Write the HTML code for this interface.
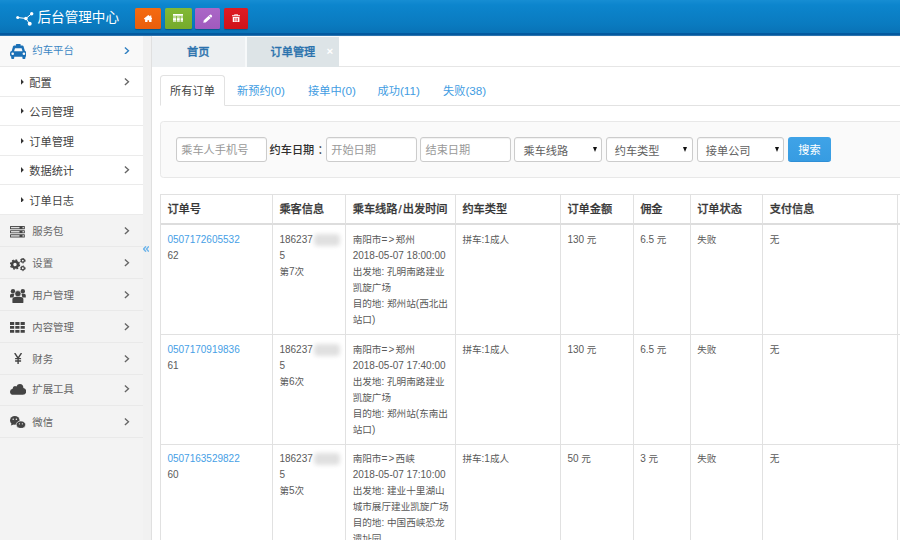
<!DOCTYPE html>
<html lang="zh-CN">
<head>
<meta charset="utf-8">
<title>后台管理中心</title>
<style>
*{box-sizing:border-box;margin:0;padding:0}
html,body{width:900px;height:540px;overflow:hidden;background:#fff}
body{font-family:"Liberation Sans","Noto Sans CJK SC",sans-serif;color:#555;position:relative;font-size:9.6px}
a{text-decoration:none;color:inherit}
ul{list-style:none}

/* ---------- header ---------- */
#hd{position:absolute;left:0;top:0;width:900px;height:36px;background:linear-gradient(to bottom,#168dd3 0,#0c85cd 5px,#0a7bc0 24px,#0972b6 33px,#03599f 33.5px,#03599f 35.4px,#f4f7f8 36px)}
#logo{position:absolute;left:15px;top:11px;width:20px;height:16px}
#title{position:absolute;left:37.5px;top:8px;font-size:13.6px;line-height:20px;color:#fff;white-space:nowrap}
.hb{position:absolute;top:8px;height:20.5px;border-radius:1.5px;box-shadow:0 1px 1px rgba(0,0,0,.25)}
.hb svg{position:absolute}
#b1{left:135px;width:26.3px;background:linear-gradient(#f56b10,#e95e0c)}
#b2{left:165px;width:27px;background:linear-gradient(#82b936,#75aa2b)}
#b3{left:195.3px;width:25.2px;background:linear-gradient(#ab67c7,#a05abd)}
#b4{left:224.3px;width:23.8px;background:linear-gradient(#de1c24,#cf1219)}

/* ---------- sidebar ---------- */
#sb{position:absolute;left:0;top:36px;width:143px;height:504px;background:#f3f3f3}
#strip{position:absolute;left:143px;top:36px;width:9px;height:504px;background:#f1f1f1;border-right:1px solid #e0e0e0}
#coll{position:absolute;left:143px;top:246.1px;width:6.4px;height:6px}
.m1{position:absolute;left:0;width:143px;height:31.95px;border-bottom:1px solid #e9e9e9;font-size:10.4px;color:#666}
#sb .ic{position:absolute}
.m1 .in{position:absolute;left:0;width:143px;height:0}
.m1 .tx{position:absolute;left:32.3px;top:9.6px;line-height:16px;white-space:nowrap}
.chev{position:absolute;left:124.4px;width:5.4px;height:7.6px}
.m1.on{background:#f9f9f9;color:#3a86c3}
.m1.on .tx{top:6.6px}
.m2{position:absolute;left:0;width:143px;height:29.45px;border-bottom:1px solid #ebebeb;background:#fff;font-size:11.2px;color:#444}
.m2 .tx{position:absolute;left:29.3px;top:7.5px;line-height:16px;white-space:nowrap}
.m2 .car{position:absolute;left:20.9px;top:11.4px;width:2.8px;height:5.8px}

/* ---------- main ---------- */
#tabs{position:absolute;left:152px;top:36px;width:748px;height:31px;background:#fff;border-bottom:1px solid #e6e6e6;border-top:1px solid #fafbfc}
.tab{position:absolute;top:0;height:29.5px;font-size:11.2px;font-weight:500;-webkit-text-stroke:.3px #2a72ad;color:#2a72ad;line-height:30.5px;text-align:center}
#t1{left:0;width:94.5px;background:#edf0f2;border-right:2px solid #f7f9fa}
#t2{left:94.5px;width:92.8px;background:#dde4e7}
#t2 .x{position:absolute;left:80px;top:-1px;font-size:11.5px;color:#fff;font-weight:bold;-webkit-text-stroke:0}

#nav{position:absolute;left:160px;top:75px;width:740px;height:30.5px;border-bottom:1px solid #e2e2e2}
.nt{position:absolute;top:0;height:30.5px;line-height:32.5px;font-size:11.2px;color:#419ce2;white-space:nowrap}
.nt .n{font-size:11.7px}
.nt.on{left:0;width:65px;border:1px solid #e2e2e2;border-bottom-color:#fff;border-radius:3.5px 3.5px 0 0;color:#444;text-align:center;line-height:31px;background:#fff}

#well{position:absolute;left:160px;top:121px;width:760px;height:56.5px;background:#fafafa;border:1px solid #e8e8e8;border-radius:3.5px}
.inp{position:absolute;top:137px;height:24.5px;background:#fff;border:1px solid #ccc;border-radius:3px;font-size:11.2px;line-height:24.5px;color:#999;padding-left:4.2px;white-space:nowrap;box-shadow:inset 0 1px 1px rgba(0,0,0,.06)}
.sel{color:#606060;padding-left:8.2px;line-height:27.5px}
.sel i{position:absolute;right:4.6px;top:8.8px;width:0;height:0;border-top:5px solid #111;border-left:2.7px solid transparent;border-right:2.7px solid transparent}
#lbl{position:absolute;left:269.5px;top:138px;line-height:24.5px;font-size:11.2px;font-weight:500;color:#2e2e2e;white-space:nowrap}
#btn{position:absolute;left:788px;top:137px;width:43px;height:24.5px;border-radius:3px;background:linear-gradient(#3fa3e7,#379ce2);border:0;border-bottom:1px solid #2f8fd6;color:#fff;font-size:11.2px;line-height:26px;text-align:center}

/* ---------- table ---------- */
#tb{position:absolute;left:160px;top:194px;width:760px;border-collapse:separate;border-spacing:0;border-left:1px solid #e1e1e1;border-top:1px solid #e1e1e1;table-layout:fixed;background:#fff}
#tb th,#tb td{border-right:1px solid #e1e1e1;border-bottom:1px solid #e1e1e1;text-align:left;vertical-align:top;padding:6.4px 6px 6.4px 6.4px;font-size:9.6px;line-height:16px;color:#5a5a5a}
#tb th{font-size:11.2px;font-weight:500;-webkit-text-stroke:.25px #363636;color:#363636;height:30px;line-height:16px;padding-top:6px;border-bottom:2px solid #ddd}
#tb td a{color:#46a0e6}
#tb td .n{font-size:10px}
#tb td .ar{letter-spacing:1.2px}
#tb th .sl{margin:0 1.1px}
.blur{display:inline-block;width:26px;height:12px;vertical-align:-3px;background:#e0e0e0;border-radius:4px;filter:blur(2px);margin-left:1px;margin-right:-30px}
</style>
</head>
<body>

<div id="hd">
  <svg id="logo" viewBox="0 0 20 16"><g fill="#fff"><circle cx="2.7" cy="6.5" r="1.5"/><circle cx="10.9" cy="7.5" r="1.8"/><circle cx="16.7" cy="2.7" r="1.7"/><circle cx="14.7" cy="12.8" r="2"/></g><path d="M2.7 6.5L10.9 7.5L16.7 2.7M10.9 7.5L14.7 12.8" stroke="#fff" stroke-width="1" fill="none"/></svg>
  <div id="title">后台管理中心</div>
  <a class="hb" id="b1"><svg style="left:8.6px;top:6.5px;width:8.6px;height:7.6px" viewBox="0 0 8.6 7.6"><path d="M4.3 0L0 3.6V4.3H1.1V7.6H3.5V5.2H5.1V7.6H7.5V4.3H8.6V3.6L7.3 2.5V.5H6.2V1.6Z" fill="#fff"/></svg></a>
  <a class="hb" id="b2"><svg style="left:7.7px;top:5.9px;width:10.6px;height:8.2px" viewBox="0 0 10.6 8.2"><path d="M0 0H10.6V1.7H0ZM0 2.6H3V8.2H0ZM3.8 2.6H6.8V8.2H3.8ZM7.6 2.6H10.6V8.2H7.6Z" fill="#fff"/><path d="M0 3.7H10.6M0 7.1H10.6" stroke="#7db32f" stroke-width=".6"/></svg></a>
  <a class="hb" id="b3"><svg style="left:7.4px;top:5.8px;width:10px;height:9px" viewBox="0 0 10 9"><path d="M2.6 6.6L7.6 2.2" stroke="#fff" stroke-width="3" stroke-linecap="round" fill="none"/><path d="M.3 8.8L.9 6L3.2 8.2Z" fill="#fff"/><path d="M6 1.8L8 4" stroke="#a660c2" stroke-width=".6"/></svg></a>
  <a class="hb" id="b4"><svg style="left:7.7px;top:5.7px;width:8.2px;height:8.5px" viewBox="0 0 8.8 8.7" preserveAspectRatio="none"><path d="M0 1.2H2.7V0H6.1V1.2H8.8V2.4H0ZM.8 3H8V7.7Q8 8.7 7 8.7H1.8Q.8 8.7 .8 7.7Z" fill="#fff"/><path d="M3.2 .9H5.6" stroke="#d9161e" stroke-width=".6"/><path d="M2.9 4V7.6M4.4 4V7.6M5.9 4V7.6" stroke="#d9161e" stroke-width=".7"/></svg></a>
</div>

<div id="sb">
<div class="m1 on" style="top:0px;height:31.4px"><span class="tx">约车平台</span><svg class="chev" style="top:10.9px" viewBox="0 0 5.4 7.6"><path d="M.9 .5L4.5 3.8L.9 7.1" fill="none" stroke="#2f7fc0" stroke-width="1.35"/></svg></div>
<div class="m2" style="top:31.4px;height:29.46px"><svg class="car" viewBox="0 0 2.8 5.8"><path d="M0 0L2.8 2.9L0 5.8Z" fill="#333"/></svg><span class="tx">配置</span><svg class="chev" style="top:10.6px" viewBox="0 0 5.4 7.6"><path d="M.9 .5L4.5 3.8L.9 7.1" fill="none" stroke="#666" stroke-width="1.35"/></svg></div>
<div class="m2" style="top:60.86px;height:29.46px"><svg class="car" viewBox="0 0 2.8 5.8"><path d="M0 0L2.8 2.9L0 5.8Z" fill="#333"/></svg><span class="tx">公司管理</span></div>
<div class="m2" style="top:90.32px;height:29.46px"><svg class="car" viewBox="0 0 2.8 5.8"><path d="M0 0L2.8 2.9L0 5.8Z" fill="#333"/></svg><span class="tx">订单管理</span></div>
<div class="m2" style="top:119.78px;height:29.46px"><svg class="car" viewBox="0 0 2.8 5.8"><path d="M0 0L2.8 2.9L0 5.8Z" fill="#333"/></svg><span class="tx">数据统计</span><svg class="chev" style="top:10.6px" viewBox="0 0 5.4 7.6"><path d="M.9 .5L4.5 3.8L.9 7.1" fill="none" stroke="#666" stroke-width="1.35"/></svg></div>
<div class="m2" style="top:149.24px;height:29.46px"><svg class="car" viewBox="0 0 2.8 5.8"><path d="M0 0L2.8 2.9L0 5.8Z" fill="#333"/></svg><span class="tx">订单日志</span></div>
<div class="m1" style="top:179px;height:32px"><div class="in" style="top:-1px"><span class="tx">服务包</span><svg class="chev" style="top:13px" viewBox="0 0 5.4 7.6"><path d="M.9 .5L4.5 3.8L.9 7.1" fill="none" stroke="#666" stroke-width="1.35"/></svg></div></div>
<div class="m1" style="top:211px;height:32px"><div class="in" style="top:-1px"><span class="tx">设置</span><svg class="chev" style="top:13px" viewBox="0 0 5.4 7.6"><path d="M.9 .5L4.5 3.8L.9 7.1" fill="none" stroke="#666" stroke-width="1.35"/></svg></div></div>
<div class="m1" style="top:243px;height:32px"><div class="in" style="top:-1px"><span class="tx">用户管理</span><svg class="chev" style="top:13px" viewBox="0 0 5.4 7.6"><path d="M.9 .5L4.5 3.8L.9 7.1" fill="none" stroke="#666" stroke-width="1.35"/></svg></div></div>
<div class="m1" style="top:275px;height:32px"><div class="in" style="top:-1px"><span class="tx">内容管理</span><svg class="chev" style="top:13px" viewBox="0 0 5.4 7.6"><path d="M.9 .5L4.5 3.8L.9 7.1" fill="none" stroke="#666" stroke-width="1.35"/></svg></div></div>
<div class="m1" style="top:307px;height:32px"><div class="in" style="top:-1px"><span class="tx">财务</span><svg class="chev" style="top:13px" viewBox="0 0 5.4 7.6"><path d="M.9 .5L4.5 3.8L.9 7.1" fill="none" stroke="#666" stroke-width="1.35"/></svg></div></div>
<div class="m1" style="top:339px;height:31px"><div class="in" style="top:-3px"><span class="tx">扩展工具</span><svg class="chev" style="top:13px" viewBox="0 0 5.4 7.6"><path d="M.9 .5L4.5 3.8L.9 7.1" fill="none" stroke="#666" stroke-width="1.35"/></svg></div></div>
<div class="m1" style="top:370px;height:32px"><div class="in" style="top:-1px"><span class="tx">微信</span><svg class="chev" style="top:13px" viewBox="0 0 5.4 7.6"><path d="M.9 .5L4.5 3.8L.9 7.1" fill="none" stroke="#666" stroke-width="1.35"/></svg></div></div>
<svg class="ic" style="left:9.8px;top:8px;width:16.6px;height:15px" viewBox="0 0 16.6 15"><g fill="#1b70b6"><rect x="6" y="0" width="4.6" height="2.2" rx=".6"/><path d="M4.3 1.5H12.3Q13.3 1.5 13.6 2.5L15.2 8H1.4L3 2.5Q3.3 1.5 4.3 1.5Z"/><rect x="0" y="7" width="16.6" height="5.8" rx="2"/><rect x="1.2" y="11.5" width="3" height="3.5" rx=".9"/><rect x="12.4" y="11.5" width="3" height="3.5" rx=".9"/></g><path d="M5 4.3H11.6L12.5 7.2H4.1Z" fill="#f9f9f9"/><circle cx="2.7" cy="9.8" r="1.3" fill="#f9f9f9"/><circle cx="13.9" cy="9.8" r="1.3" fill="#f9f9f9"/></svg><svg class="ic" style="left:10px;top:190.1px;width:14.8px;height:11.5px" viewBox="0 0 14.8 11.5"><g fill="#444"><rect x="0" y="0" width="14.8" height="3.2" rx=".5"/><rect x="0" y="4.15" width="14.8" height="3.2" rx=".5"/><rect x="0" y="8.3" width="14.8" height="3.2" rx=".5"/></g><g fill="#dedede"><rect x=".9" y=".9" width="8.6" height="1.4"/><rect x="12.5" y=".9" width="1.4" height="1.4"/><rect x=".9" y="5.05" width="8.6" height="1.4"/><rect x="12.5" y="5.05" width="1.4" height="1.4"/><rect x=".9" y="9.2" width="8.6" height="1.4"/><rect x="12.5" y="9.2" width="1.4" height="1.4"/></g></svg><svg class="ic" style="left:10px;top:221.5px;width:16px;height:14px" viewBox="0 0 16 14"><g fill="none" stroke="#444"><circle cx="5" cy="6.5" r="3" stroke-width="2.6"/><circle cx="5" cy="6.5" r="4.5" stroke-width="1.4" stroke-dasharray="1.767 1.767"/><circle cx="12.8" cy="2.6" r="1.6" stroke-width="1.3"/><circle cx="12.8" cy="2.6" r="2.4" stroke-width=".9" stroke-dasharray="1.257 1.257"/><circle cx="12.8" cy="10.3" r="1.6" stroke-width="1.3"/><circle cx="12.8" cy="10.3" r="2.4" stroke-width=".9" stroke-dasharray="1.257 1.257"/></g></svg><svg class="ic" style="left:10.2px;top:252.6px;width:15.8px;height:14.8px" viewBox="0 0 15.8 14.8"><g fill="#444"><circle cx="3" cy="2.3" r="2.2"/><circle cx="12.8" cy="2.3" r="2.2"/><path d="M0 8.6V6.4Q0 4.8 1.6 4.8H4.4L3.4 8.6ZM15.8 8.6V6.4Q15.8 4.8 14.2 4.8H11.4L12.4 8.6Z"/><circle cx="7.9" cy="4.7" r="3.1" stroke="#f3f3f3" stroke-width=".6"/><path d="M2.4 13V10.6Q2.4 8 5 8H10.8Q13.4 8 13.4 10.6V13Q13.4 14.8 11.6 14.8H4.2Q2.4 14.8 2.4 13Z"/></g></svg><svg class="ic" style="left:10.2px;top:285.8px;width:14.8px;height:10.8px" viewBox="0 0 14.8 10.8"><path d="M0 0H4.2V2.9H0ZM5.3 0H9.5V2.9H5.3ZM10.6 0H14.8V2.9H10.6ZM0 3.95H4.2V6.85H0ZM5.3 3.95H9.5V6.85H5.3ZM10.6 3.95H14.8V6.85H10.6ZM0 7.9H4.2V10.8H0ZM5.3 7.9H9.5V10.8H5.3ZM10.6 7.9H14.8V10.8H10.6Z" fill="#444"/></svg><svg class="ic" style="left:13.5px;top:317.2px;width:8.2px;height:11px" viewBox="0 0 8.2 11"><path d="M.7 0L4.1 5.2L7.5 0M4.1 5V11M1.1 5.6H7.1M1.1 8H7.1" fill="none" stroke="#444" stroke-width="1.4"/></svg><svg class="ic" style="left:10.3px;top:348.2px;width:16.2px;height:10.8px" viewBox="0 0 16.2 10.8"><path d="M3.4 10.8Q0 10.8 0 7.7Q0 5.2 2.6 4.7Q2.8 2.2 5 2Q5.9 2 6.4 2.4Q7.4 0 9.9 0Q13.3 .2 13.4 4Q16.2 4.4 16.2 7.4Q16.2 10.8 12.8 10.8Z" fill="#444"/></svg><svg class="ic" style="left:10.3px;top:379.6px;width:15.6px;height:12.8px" viewBox="0 0 15.6 12.8"><g fill="#444"><ellipse cx="4.8" cy="4.4" rx="4.8" ry="4.3"/><path d="M1.6 7.3L.9 9.6L3.6 8.4Z"/><ellipse cx="10.9" cy="8.7" rx="4.7" ry="3.8" stroke="#f3f3f3" stroke-width=".7"/><path d="M13 11.6L13.9 12.8L11.4 12.3Z"/></g><g fill="#f3f3f3"><circle cx="3.2" cy="3.3" r=".75"/><circle cx="6.4" cy="3.3" r=".75"/><circle cx="9.4" cy="7.8" r=".65"/><circle cx="12.4" cy="7.8" r=".65"/></g></svg>
</div>
<div id="strip"></div>
<svg id="coll" viewBox="0 0 6.4 6"><path d="M3 .3L.6 3L3 5.7M5.9 .3L3.5 3L5.9 5.7" fill="none" stroke="#6db4ea" stroke-width="1.4"/></svg>

<div id="tabs">
  <div class="tab" id="t1">首页</div>
  <div class="tab" id="t2">订单管理<span class="x">×</span></div>
</div>

<div id="nav">
  <div class="nt on">所有订单</div>
  <div class="nt" style="left:77px">新预约<span class="n">(0)</span></div>
  <div class="nt" style="left:148px">接单中<span class="n">(0)</span></div>
  <div class="nt" style="left:217.5px">成功<span class="n">(11)</span></div>
  <div class="nt" style="left:283px">失败<span class="n">(38)</span></div>
</div>

<div id="well"></div>
<div class="inp" style="left:176px;width:90.5px">乘车人手机号</div>
<div id="lbl">约车日期<span style="position:relative;left:3.2px">：</span></div>
<div class="inp" style="left:326px;width:91px">开始日期</div>
<div class="inp" style="left:420.3px;width:90.5px">结束日期</div>
<div class="inp sel" style="left:514.3px;width:88px">乘车线路<i></i></div>
<div class="inp sel" style="left:605.5px;width:87.5px">约车类型<i></i></div>
<div class="inp sel" style="left:696.6px;width:87.5px">接单公司<i></i></div>
<div id="btn">搜索</div>

<table id="tb">
  <colgroup><col style="width:112px"><col style="width:73.3px"><col style="width:109.7px"><col style="width:105px"><col style="width:72.8px"><col style="width:57px"><col style="width:72.5px"><col style="width:135px"><col></colgroup>
  <tr><th>订单号</th><th>乘客信息</th><th>乘车线路<span class="sl">/</span>出发时间</th><th>约车类型</th><th>订单金额</th><th>佣金</th><th>订单状态</th><th>支付信息</th><th></th></tr>
  <tr style="height:109.4px"><td><a><span class="n">0507172605532</span></a><br><span class="n">62</span></td><td><span class="n">186237</span><span class="blur"></span><br><span class="n">5</span><br>第<span class="n">7</span>次</td><td>南阳市<span class="n ar">=&gt;</span>郑州<br><span class="n">2018-05-07 18:00:00</span><br>出发地<span class="n">: </span>孔明南路建业凯旋广场<br>目的地<span class="n">: </span>郑州站<span class="n">(</span>西北出站口<span class="n">)</span></td><td>拼车<span class="n">:1</span>成人</td><td><span class="n">130</span> 元</td><td><span class="n">6.5</span> 元</td><td>失败</td><td>无</td><td></td></tr>
  <tr style="height:109.4px"><td><a><span class="n">0507170919836</span></a><br><span class="n">61</span></td><td><span class="n">186237</span><span class="blur"></span><br><span class="n">5</span><br>第<span class="n">6</span>次</td><td>南阳市<span class="n ar">=&gt;</span>郑州<br><span class="n">2018-05-07 17:40:00</span><br>出发地<span class="n">: </span>孔明南路建业凯旋广场<br>目的地<span class="n">: </span>郑州站<span class="n">(</span>东南出站口<span class="n">)</span></td><td>拼车<span class="n">:1</span>成人</td><td><span class="n">130</span> 元</td><td><span class="n">6.5</span> 元</td><td>失败</td><td>无</td><td></td></tr>
  <tr style="height:109.4px"><td><a><span class="n">0507163529822</span></a><br><span class="n">60</span></td><td><span class="n">186237</span><span class="blur"></span><br><span class="n">5</span><br>第<span class="n">5</span>次</td><td>南阳市<span class="n ar">=&gt;</span>西峡<br><span class="n">2018-05-07 17:10:00</span><br>出发地<span class="n">: </span>建业十里湖山城市展厅建业凯旋广场<br>目的地<span class="n">: </span>中国西峡恐龙遗址园</td><td>拼车<span class="n">:1</span>成人</td><td><span class="n">50</span> 元</td><td><span class="n">3</span> 元</td><td>失败</td><td>无</td><td></td></tr>
</table>

</body>
</html>
